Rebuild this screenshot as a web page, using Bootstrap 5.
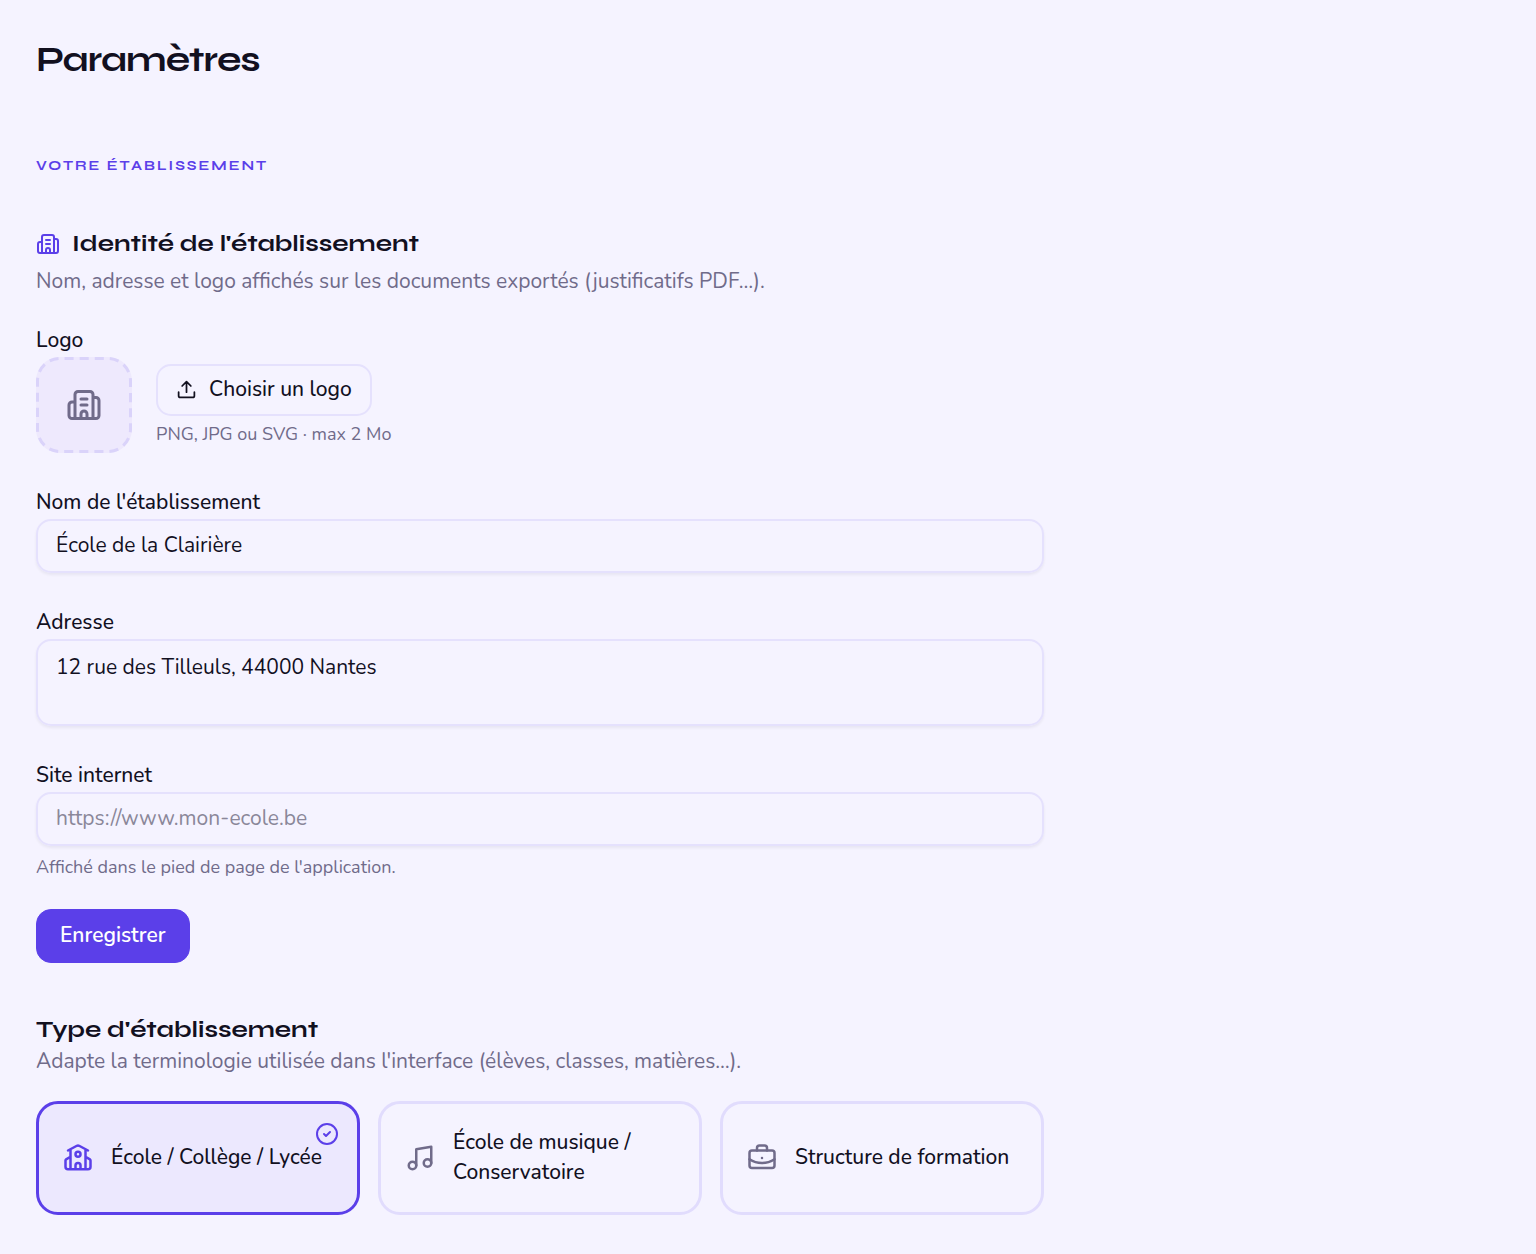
<!DOCTYPE html>
<html lang="fr">
<head>
<meta charset="utf-8">
<meta name="viewport" content="width=device-width, initial-scale=1">
<title>Paramètres</title>
<link href="https://cdn.jsdelivr.net/npm/bootstrap@5.3.0/dist/css/bootstrap.min.css" rel="stylesheet">
<style>
:root{--ink:#12101f;--muted:#706b8a;--brand:#5b3fe9;--line:#e1dcfd;--line-soft:#e5e1fd;--tint:#ece8fe;--page:#f5f3ff}
body{background:var(--page);color:var(--ink);font-family:"Nunito","Open Sans",sans-serif;font-size:21px;line-height:30px}
h1,h2,.eyebrow{font-family:"Syne","DejaVu Sans",sans-serif;font-weight:700;color:var(--ink)}
h1{font-size:36px;line-height:48px;letter-spacing:-1px;margin-bottom:67px}
.eyebrow{font-size:14px;line-height:30px;letter-spacing:2px;color:var(--brand);text-transform:uppercase;margin-bottom:48px}
h2{font-size:24px;line-height:30px}
.page-main{padding:36px}
.settings-body{max-width:1008px}
.intro{color:var(--muted);margin-bottom:25px}
.title-row{margin-bottom:7px}
.field-intro{margin-bottom:29px}
.hint{color:var(--muted);font-size:18px;line-height:24px}
.pick-hint{margin-top:6px}
.field{margin-bottom:34px}
.field-last{margin-bottom:30px}
.field-last .hint{margin-top:9px}
.field-label{display:block;font-weight:500;margin-bottom:2px}
.ico{fill:none;stroke:currentColor;stroke-width:2;stroke-linecap:round;stroke-linejoin:round;flex:none}
.form-control,.form-control:focus{background:transparent;color:var(--ink);border:2px solid var(--line-soft);border-radius:15px;font-size:21px;line-height:30px;box-shadow:0 2px 3px rgba(18,16,31,.06)}
.form-control{padding:9px 18px 11px;height:54px}
textarea.form-control{height:87px;padding-top:11px;resize:none}
.form-control::placeholder{color:#8a8799;opacity:1}
.logo-drop{width:96px;height:96px;border-radius:24px;background:#eee9fd;color:var(--muted)}
.dashes{fill:none;stroke:#dad3fa;stroke-width:3;stroke-dasharray:9 6;stroke-dashoffset:10.5}
.btn-pick{--bs-btn-color:var(--ink);--bs-btn-border-color:var(--line-soft);--bs-btn-hover-bg:var(--tint);--bs-btn-font-size:21px;--bs-btn-line-height:30px;--bs-btn-font-weight:500;border-width:2px;border-radius:15px;padding:8px 18px 10px}
.btn-save{--bs-btn-color:#fff;--bs-btn-bg:var(--brand);--bs-btn-border-color:var(--brand);--bs-btn-hover-color:#fff;--bs-btn-hover-bg:#4c32d2;--bs-btn-font-size:21px;--bs-btn-line-height:30px;--bs-btn-font-weight:600;border-radius:15px;padding:10px 23px 12px}
.kinds{--bs-gutter-x:18px;--bs-gutter-y:18px}
.kind{gap:18px;min-height:114px;padding:23px 24px;border:3px solid var(--line);border-radius:22px;color:var(--ink);font-size:21px;line-height:30px;font-weight:500}
.kind-name{margin-bottom:2px}
.kind .ico{color:var(--muted)}
.kind .tick{display:none;top:18px;right:18px}
.btn-check:checked+.kind{background:var(--tint);border-color:var(--brand);color:var(--ink)}
.btn-check:checked+.kind .ico{color:var(--brand)}
.btn-check:checked+.kind .tick{display:block}
.title-ico{color:var(--brand)}
.title-kind{margin-bottom:1px}
.gap-12{gap:12px}
.gap-24{gap:24px}
</style>
<script src="https://cdn.jsdelivr.net/npm/bootstrap@5.3.0/dist/js/bootstrap.bundle.min.js" defer></script>
</head>
<body>
<svg class="d-none" aria-hidden="true">
  <symbol id="i-building" viewBox="0 0 24 24"><path d="M10 12h4M10 8h4M14 21v-3a2 2 0 0 0-4 0v3M6 10H4a2 2 0 0 0-2 2v7a2 2 0 0 0 2 2h16a2 2 0 0 0 2-2V9a2 2 0 0 0-2-2h-2M6 21V5a2 2 0 0 1 2-2h8a2 2 0 0 1 2 2v16"/></symbol>
</svg>
<main class="page-main">
  <h1>Paramètres</h1>
  <div class="settings-body">
    <p class="eyebrow">Votre établissement</p>

    <form onsubmit="return false">
      <div class="d-flex align-items-center gap-12 title-row">
        <svg class="ico title-ico" width="24" height="24" aria-hidden="true"><use href="#i-building"/></svg>
        <h2 class="mb-0">Identité de l'établissement</h2>
      </div>
      <p class="intro field-intro">Nom, adresse et logo affichés sur les documents exportés (justificatifs PDF…).</p>

      <div class="field">
        <label class="field-label" for="pick">Logo</label>
        <div class="d-flex align-items-center gap-24">
          <div class="logo-drop d-flex align-items-center justify-content-center position-relative">
            <svg class="dashes position-absolute top-0 start-0" width="96" height="96" aria-hidden="true"><rect x="1.5" y="1.5" width="93" height="93" rx="22.5" pathLength="330"/></svg>
            <svg class="ico" width="36" height="36" aria-hidden="true"><use href="#i-building"/></svg>
          </div>
          <div>
            <button type="button" id="pick" class="btn btn-pick d-flex align-items-center gap-12">
              <svg class="ico" width="21" height="21" viewBox="0 0 24 24" aria-hidden="true"><path d="M12 3v12M17 8l-5-5-5 5M21 15v4a2 2 0 0 1-2 2H5a2 2 0 0 1-2-2v-4"/></svg>
              Choisir un logo
            </button>
            <p class="hint pick-hint mb-0">PNG, JPG ou SVG · max 2 Mo</p>
          </div>
        </div>
      </div>

      <div class="field">
        <label class="field-label" for="nom">Nom de l'établissement</label>
        <input id="nom" type="text" class="form-control" value="École de la Clairière">
      </div>
      <div class="field">
        <label class="field-label" for="adresse">Adresse</label>
        <textarea id="adresse" class="form-control d-block">12 rue des Tilleuls, 44000 Nantes</textarea>
      </div>
      <div class="field-last">
        <label class="field-label" for="site">Site internet</label>
        <input id="site" type="url" class="form-control" placeholder="https://www.mon-ecole.be" aria-describedby="site-hint">
        <p id="site-hint" class="hint mb-0">Affiché dans le pied de page de l'application.</p>
      </div>
      <button type="submit" class="btn btn-save">Enregistrer</button>
    </form>

    <section class="mt-5 pt-1">
      <h2 class="title-kind">Type d'établissement</h2>
      <p class="intro">Adapte la terminologie utilisée dans l'interface (élèves, classes, matières…).</p>
      <div class="row row-cols-1 row-cols-md-3 kinds">
        <div class="col d-flex">
          <input type="radio" class="btn-check" name="kind" id="k1" checked>
          <label class="kind btn w-100 text-start d-flex align-items-center position-relative" for="k1">
            <svg class="ico" width="30" height="30" viewBox="0 0 24 24" aria-hidden="true"><path d="M14 21v-3a2 2 0 0 0-4 0v3M18 5v16M4 6l7.106-3.79a2 2 0 0 1 1.788 0L20 6M6 11l-3.52 2.147a1 1 0 0 0-.48.854V19a2 2 0 0 0 2 2h16a2 2 0 0 0 2-2v-5a1 1 0 0 0-.48-.853L18 11M6 5v16"/><circle cx="12" cy="9" r="2"/></svg>
            <span class="kind-name text-nowrap">École / Collège / Lycée</span>
            <svg class="ico tick position-absolute" width="24" height="24" viewBox="0 0 24 24" aria-hidden="true"><circle cx="12" cy="12" r="10"/><path d="M9 12l2 2 4-4"/></svg>
          </label>
        </div>
        <div class="col d-flex">
          <input type="radio" class="btn-check" name="kind" id="k2">
          <label class="kind btn w-100 text-start d-flex align-items-center position-relative" for="k2">
            <svg class="ico" width="30" height="30" viewBox="0 0 24 24" aria-hidden="true"><path d="M9 18V5l12-2v13"/><circle cx="6" cy="18" r="3"/><circle cx="18" cy="16" r="3"/></svg>
            <span class="kind-name">École de musique /<br>Conservatoire</span>
          </label>
        </div>
        <div class="col d-flex">
          <input type="radio" class="btn-check" name="kind" id="k3">
          <label class="kind btn w-100 text-start d-flex align-items-center position-relative" for="k3">
            <svg class="ico" width="30" height="30" viewBox="0 0 24 24" aria-hidden="true"><path d="M12 12h.01M16 6V4a2 2 0 0 0-2-2h-4a2 2 0 0 0-2 2v2M22 13a18.15 18.15 0 0 1-20 0"/><rect x="2" y="6" width="20" height="14" rx="2"/></svg>
            <span class="kind-name">Structure de formation</span>
          </label>
        </div>
      </div>
    </section>
  </div>
</main>
</body>
</html>
